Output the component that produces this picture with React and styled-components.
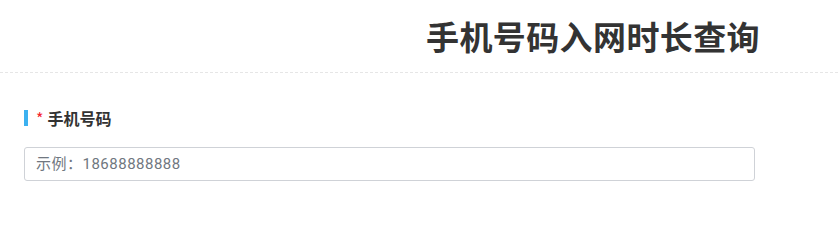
import React from "react";
import styled, { createGlobalStyle } from "styled-components";

const GlobalStyle = createGlobalStyle`
  html, body {
    margin: 0;
    padding: 0;
    background: #ffffff;
    font-family: "Noto Sans CJK SC", "Noto Sans", "Liberation Sans", sans-serif;
  }
`;

const Page = styled.div`
  width: 838px;
  height: 202px;
  overflow: hidden;
  background: #fff;
`;

const Header = styled.header`
  height: 73px;
  display: flex;
  align-items: center;
  padding-left: 426px;
  border-bottom: 1px dashed #e6e6e6;
  box-sizing: border-box;
`;

const Title = styled.h1`
  margin: 0;
  font-size: 33px;
  font-weight: 700;
  color: #333;
  letter-spacing: 0.4px;
  line-height: 1;
`;

const Form = styled.div`
  padding: 35px 83px 0 24px;
`;

const FieldLabel = styled.div`
  display: flex;
  align-items: center;
  height: 20px;
  font-size: 16px;
  font-weight: 700;
  color: #333;

  &::before {
    content: "";
    width: 4px;
    height: 16px;
    background: #3cb1f0;
    margin-right: 8px;
  }
`;

const Required = styled.span`
  color: #f5222d;
  font-weight: 400;
  margin-right: 4px;
`;

const Input = styled.input`
  display: block;
  box-sizing: border-box;
  width: 731px;
  height: 34px;
  margin-top: 19px;
  padding: 0 11px;
  border: 1px solid #cfd2d7;
  border-radius: 3px;
  font-family: Roboto, "Noto Sans CJK SC", sans-serif;
  font-size: 15px;
  letter-spacing: 0.5px;
  color: #333;
  outline: none;

  &::placeholder {
    color: #707780;
  }
`;

export default function App() {
  return (
    <Page>
      <GlobalStyle />
      <Header>
        <Title>手机号码入网时长查询</Title>
      </Header>
      <Form>
        <FieldLabel>
          <Required>*</Required>手机号码
        </FieldLabel>
        <Input placeholder="示例：18688888888" />
      </Form>
    </Page>
  );
}
